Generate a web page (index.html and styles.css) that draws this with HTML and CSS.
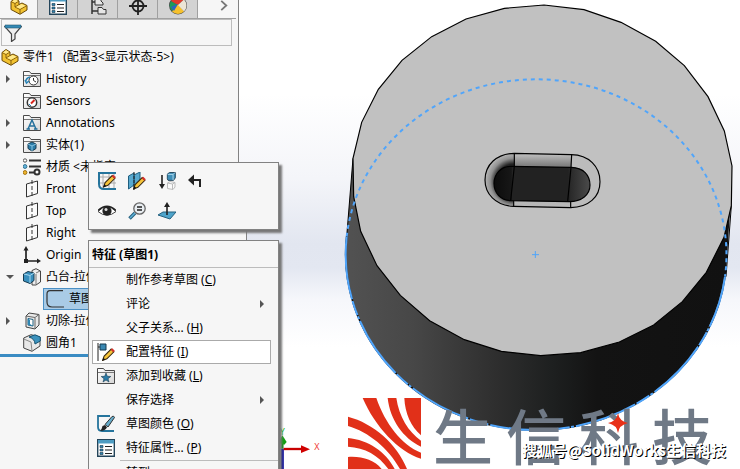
FILE: index.html
```
<!DOCTYPE html>
<html lang="zh-CN">
<head>
<meta charset="utf-8">
<title>零件1</title>
<link rel="stylesheet" href="styles.css">
</head>
<body>
<svg class="defs" aria-hidden="true">
  <defs>
    <linearGradient id="paper" x1="0" y1="0" x2="1" y2="1"><stop offset="0" stop-color="#fff"/><stop offset="1" stop-color="#d6d6d6"/></linearGradient>
    <symbol id="part" viewBox="0 0 18 18"><path d="M1 4.500L5 1.500L9 4L9 7.500L12 6L17 8.500V13L10 17.300L1 12.500Z" fill="#f2c230" stroke="#6b4a08"/><path d="M1 4.500L5 6.500L9 4M5 6.500V10L10 12.500L17 8.500M5 10L9 7.500M10 12.500V17" fill="none" stroke="#8a6410"/><path d="M2 4.500L5 2.300L8 4L5 5.700ZM6 10L11.500 7L15.500 8.700L10 11.700Z" fill="#ffe98c"/></symbol>
    <symbol id="folder" viewBox="0 0 18 18"><path d="M.500 16.500V1.500H6.500L8 3.500H17.500V16.500Z" fill="url(#paper)" stroke="#4a4a4a"/><path d="M1 5.500H17" stroke="#777"/></symbol>
    <symbol id="plane" viewBox="0 0 18 18"><path d="M3.500 4L14.500 1V13.500L3.500 17Z" fill="#fafafa" stroke="#333"/><path d="M9 0V18" stroke="#333" stroke-dasharray="4 2"/></symbol>
    <symbol id="list" viewBox="0 0 18 18"><path d="M.700 .700H17.300V17.300H.700Z" fill="#fff" stroke="#24455a" stroke-width="1.400"/><path d="M1 1H17V4.500H1Z" fill="#4e9cc2"/><path d="M3 6.500H6V8.500H3ZM3 10H6V12H3ZM3 13.500H6V15.500H3Z" fill="#2f83b0" stroke="#18384a" stroke-width=".6"/><path d="M8 7.500H15M8 11H15M8 14.500H15" stroke="#222" stroke-width="1.200"/></symbol>
    <symbol id="pencil" viewBox="0 0 12 12"><path d="M.500 11.500L2 7.500L8.500 1L11 3.500L4.500 10Z" fill="#f7c53a" stroke="#3a2a10"/><path d="M8 1.500L9.500 .200L11.800 2.500L10.500 4Z" fill="#d8322a"/><path d="M.300 11.700L1.300 9L3 10.700Z" fill="#111"/></symbol>
    <symbol id="cube" viewBox="0 0 10 10"><path d="M.500 2.500L3 .600H9.500V6.500L7.500 9.300H1.500L.500 7.500Z" fill="#3f8fb8" stroke="#173b50"/><path d="M1 2.700H7L9 1M7 3V9" fill="none" stroke="#b4dcf0"/></symbol>
  </defs>
</svg>

<div class="app">
  <aside class="sidebar">
    <nav class="tabs" aria-label="管理器">
      <button class="tab active" aria-label="设计树"><svg class="icon"><use href="#part"/></svg></button>
      <button class="tab" aria-label="属性"><svg class="icon"><use href="#list"/></svg></button>
      <button class="tab" aria-label="配置"><svg class="icon" viewBox="0 0 18 18"><path d="M3 1V17M3 5H7M3 14H9" fill="none" stroke="#333" stroke-width="1.500"/><path d="M6 1H12V4L14 6V8H6ZM9 10.500H13L14.500 12.500H17V17H9Z" fill="#e6e6e6" stroke="#333"/></svg></button>
      <button class="tab" aria-label="尺寸"><svg class="icon" viewBox="0 0 18 18"><circle cx="9" cy="9" r="5.500" fill="none" stroke="#222" stroke-width="1.800"/><path d="M9 0V18M0 9H18" stroke="#222" stroke-width="1.800"/></svg></button>
      <button class="tab" aria-label="外观"><svg class="icon" viewBox="0 0 18 18"><circle cx="9" cy="8.500" r="9" fill="#4b4b4b"/><path d="M9 8L2 4A8.500 8.500 0 0 0 3 14Z" fill="#1d9a58"/><path d="M9 7L3 14.500A8.500 8.500 0 0 0 15 14.500Z" fill="#f6c12d"/><path d="M9 8L2 4A8.500 8.500 0 0 1 15 2.500Z" fill="#e23a2c"/><path d="M9 8L15 2.500A8.500 8.500 0 0 1 15 14.500Z" fill="#ece5d6"/><path d="M9 7L2 10L5 14Z" fill="#2b65c0"/></svg></button>
      <button class="more" aria-label="更多"><svg class="chevron" viewBox="0 0 8 12"><path d="M1 1L6.500 6L1 11" fill="none" stroke="#777" stroke-width="2"/></svg></button>
    </nav>
    <label class="filter">
      <svg class="icon" viewBox="0 0 18 18"><path d="M.700 2.500H17.300L11 10V15L7.500 17.500V10Z" fill="#eee" stroke="#444" stroke-width="1.200"/><path d="M1 1H17V4H1Z" fill="#3389b5" stroke="#26586f" stroke-width=".6"/></svg>
      <input type="text" aria-label="过滤器">
    </label>
    <ul class="tree">
      <li class="row root"><svg class="icon"><use href="#part"/></svg><span>零件1&nbsp;&nbsp; (配置3&lt;显示状态-5&gt;)</span></li>
      <li class="row"><button class="twist" aria-label="展开"></button><svg class="icon" viewBox="0 0 18 18"><use href="#folder"/><circle cx="10.500" cy="10.500" r="4.500" fill="#fff" stroke="#333"/><path d="M10.500 8V10.500L13 12" fill="none" stroke="#333"/><path d="M2.500 12C3 9 4.500 7.500 7 7M2 10L3.500 13L6 11" fill="none" stroke="#2a83b5" stroke-width="1.600"/></svg><span>History</span></li>
      <li class="row leaf"><svg class="icon" viewBox="0 0 18 18"><use href="#folder"/><circle cx="9" cy="10.500" r="4.700" fill="#fff" stroke="#333" stroke-width="1.500"/><path d="M8 11.500L11.500 8" stroke="#d7261e" stroke-width="2"/><path d="M6 12L8 14" stroke="#2a83b5"/></svg><span>Sensors</span></li>
      <li class="row"><button class="twist" aria-label="展开"></button><svg class="icon" viewBox="0 0 18 18"><use href="#folder"/><path d="M5 15L9 6L13 15M6.500 12H11.500M3.500 15H7M11 15H14.500" fill="none" stroke="#25709c" stroke-width="1.500"/></svg><span>Annotations</span></li>
      <li class="row"><button class="twist" aria-label="展开"></button><svg class="icon" viewBox="0 0 18 18"><use href="#folder"/><path d="M5 8L9 6L13 8V12.500L9 15L5 12.500Z" fill="#2c7ca8" stroke="#173b50"/><path d="M5 8L9 10L13 8M9 10V15" fill="none" stroke="#86c4e2"/></svg><span>实体(1)</span></li>
      <li class="row leaf"><svg class="icon" viewBox="0 0 18 18"><circle cx="2" cy="2.500" r="1.700" fill="#fff" stroke="#555"/><circle cx="2" cy="8.500" r="1.900" fill="#62b4dc" stroke="#31708f"/><circle cx="2" cy="14.500" r="1.900" fill="#f0b62c" stroke="#a37414"/><path d="M6 2.500H18M6 8.500H18M6 14.500H11" stroke="#333" stroke-width="1.800"/><circle cx="14" cy="14" r="2.500" fill="#fff" stroke="#333" stroke-width="2"/></svg><span>材质 &lt;未指定&gt;</span></li>
      <li class="row leaf"><svg class="icon"><use href="#plane"/></svg><span>Front</span></li>
      <li class="row leaf"><svg class="icon"><use href="#plane"/></svg><span>Top</span></li>
      <li class="row leaf"><svg class="icon"><use href="#plane"/></svg><span>Right</span></li>
      <li class="row leaf"><svg class="icon" viewBox="0 0 18 18"><path d="M3 2V15H16" fill="none" stroke="#222" stroke-width="1.700"/><path d="M.500 4.500L3 0L5.500 4.500ZM14 12.500L18 15L14 17.500ZM1 13H5V17H1Z" fill="#222"/></svg><span>Origin</span></li>
      <li class="row"><button class="twist open" aria-label="折叠"></button><svg class="icon" viewBox="0 0 18 18"><path d="M9 2.500L13 .700L17.500 3V14L13 17H9Z" fill="#eee" stroke="#444"/><path d="M13 6V16M13 5L17 3" stroke="#777"/><path d="M.500 6L5 3.500L11 5V12.500L7 15.500L.500 13Z" fill="#398fbd" stroke="#173b50"/><path d="M1 6L7 7.500L11 5M7 8V15" fill="none" stroke="#a8d8ef"/></svg><span>凸台-拉伸1</span></li>
      <li class="row selected"><svg class="icon" viewBox="0 0 18 18"><path d="M17 .700H4Q1 .700 1 4V12Q1 17 6 17H18" fill="none" stroke="#333" stroke-width="1.200"/></svg><span>草图1</span></li>
      <li class="row"><button class="twist" aria-label="展开"></button><svg class="icon" viewBox="0 0 18 18"><path d="M3 4L6 1L16 2.500V13L12 17L3 15Z" fill="#e8e8e8" stroke="#444"/><path d="M3 4L12 5.500L16 2.500M12 6V16.500" fill="none" stroke="#666"/><path d="M5 6.500L10 7.500V14L5 13Z" fill="#fff" stroke="#22617f"/><path d="M5 6.500L7 8V12L10 14L5 13Z" fill="#2e86b3"/></svg><span>切除-拉伸1</span></li>
      <li class="row leaf"><svg class="icon" viewBox="0 0 18 18"><path d="M.700 4L8 .700L17 3V12L9 17.300L.700 14Z" fill="#e8e8e8" stroke="#444"/><path d="M.700 5L8 8L9 17" fill="none" stroke="#888"/><path d="M6 3L12 .800L17.300 3V7L12 10Q12 5 6 3Z" fill="#3c92bd" stroke="#17526f"/></svg><span>圆角1</span></li>
    </ul>
  </aside>

  <main class="viewport">
    <svg class="model" viewBox="0 0 1503 1407" preserveAspectRatio="xMinYMin meet" role="img" aria-label="零件模型">
      <defs>
        <linearGradient id="side" gradientUnits="userSpaceOnUse" x1="31" y1="0" x2="1173" y2="0"><stop offset="0" stop-color="#525252"/><stop offset=".18" stop-color="#474747"/><stop offset=".38" stop-color="#303030"/><stop offset=".54" stop-color="#1e2020"/><stop offset=".66" stop-color="#131313"/><stop offset="1" stop-color="#111"/></linearGradient>
        <linearGradient id="rim" x1="0" y1="0" x2="0" y2="1"><stop offset="0" stop-color="#c2c2c2"/><stop offset=".22" stop-color="#808080"/><stop offset=".5" stop-color="#b0b0b0"/><stop offset="1" stop-color="#b8b8b8"/></linearGradient>
        <radialGradient id="rimLeft" gradientUnits="userSpaceOnUse" cx="536" cy="545" r="88"><stop offset=".6" stop-color="#222"/><stop offset=".8" stop-color="#909090"/><stop offset="1" stop-color="#bbb"/></radialGradient>
        <linearGradient id="pit" x1="0" x2="1"><stop offset="0" stop-color="#0c0c0c"/><stop offset=".18" stop-color="#171717"/><stop offset=".19" stop-color="#222"/><stop offset=".77" stop-color="#222"/><stop offset=".8" stop-color="#2a2a2a"/><stop offset="1" stop-color="#4b4b4b"/></linearGradient>
      </defs>
      <g transform="translate(288 0)">
        <ellipse cx="602" cy="763" rx="570" ry="527" fill="url(#side)"/>
        <path d="M54 475L33 735L80 900L1120 900L1172 830L1190 560Z" fill="url(#side)"/>
        <path d="M54 475L33 735M1189 617L1173 830" stroke="#000" stroke-width="3"/>
        <path d="M627 15L747 29L858 67L962 124L1048 197L1119 290L1168 393L1191 498L1189 617L1167 712L1114 817L1042 905L956 975L853 1026L737 1058L617 1067L499 1054L388 1019L284 962L196 886L126 797L77 694L56 590L54 475L80 367L130 268L201 181L290 110L393 57L508 25Z" fill="#c1c1c1" stroke="#000" stroke-width="3.500"/>
        <path d="M35 710A570 527 0 0 1 602 238A570 527 0 0 1 1170 830" fill="none" stroke="#50a5fb" stroke-width="6" stroke-dasharray="12 12"/>
        <path d="M35 710A570 527 0 0 0 602 1290A570 527 0 0 0 1170 830" fill="none" stroke="#111" stroke-width="5"/>
        <path d="M35 710A570 527 0 0 0 602 1290A570 527 0 0 0 1170 830" fill="none" stroke="#50a5fb" stroke-width="6" stroke-dasharray="190 5 45 4 9 6"/>
        <path d="M538 460L709 464C762 465 795 500 795 545C795 592 760 622 707 623L536 619C480 617 450 580 450 540C450 495 485 460 538 460Z" fill="url(#rim)"/>
        <path d="M538 462C485 462 452 495 452 540C452 580 480 615 536 617Z" fill="url(#rimLeft)"/>
        <path d="M709 464C762 465 795 500 795 545C795 592 760 622 707 623L705 604C745 600 768 580 764 548C762 520 740 503 709 502Z" fill="#bcbcbc"/>
        <path d="M538 460L709 464C762 465 795 500 795 545C795 592 760 622 707 623L536 619C480 617 450 580 450 540C450 495 485 460 538 460Z" fill="none" stroke="#000" stroke-width="3.500"/>
        <path d="M527 499L709 502C745 503 765 525 765 555C765 585 740 604 703 605L527 602C497 600 477 580 477 550C477 520 500 499 527 499Z" fill="url(#pit)" stroke="#000" stroke-width="3.500"/>
        <path d="M538 460V499L527 602M536 602V619M710 464L708 502L698 604M707 604V623" fill="none" stroke="#000" stroke-width="3.500"/>
        <path d="M591 764H612M601 753V774" stroke="#50a5fb" stroke-width="3"/>
      </g>
      <g class="triad">
        <path d="M130 1346V1407" stroke="#0b0ba0" stroke-width="9"/>
        <path d="M130 1346V1322" stroke="#0a8a0a" stroke-width="7"/><path d="M118 1328L130 1306L143 1326L136 1334Z" fill="#12a012"/>
        <path d="M134 1347H188" stroke="#c80000" stroke-width="7"/><path d="M186 1336L213 1348L186 1359Z" fill="#d00000"/>
        <text class="axis y" x="122" y="1305">Y</text>
        <text class="axis x" x="226" y="1351">X</text>
      </g>
    </svg>
    <div class="brand">
      <svg class="logo" viewBox="39 54 219 213"><path d="M83 54H124C150 130 200 195 258 218V236C190 215 120 140 83 54ZM158 54H184C192 110 220 155 258 182V200C205 175 165 120 158 54ZM208 54H258V166C228 140 210 100 208 54ZM39 110C115 130 185 190 216 267H195C160 205 100 155 39 138ZM39 174C100 180 152 215 179 267H160C130 225 90 203 39 200ZM39 231C80 228 118 240 140 267H39Z" fill="#e13019"/></svg>
      <div class="name"><span>生</span><span>信</span><span>科</span><span>技</span></div>
      <svg class="star" viewBox="0 0 20 20"><path d="M10 0Q11 8 20 10Q11 12 10 20Q9 12 0 10Q9 8 10 0Z" fill="#e83018"/></svg>
    </div>
    <p class="credit">搜狐号@SolidWorks生信科技</p>
  </main>
</div>

<div class="splitter"></div>

<div class="popup toolbar" role="toolbar">
  <button aria-label="编辑草图"><svg class="icon" viewBox="0 0 18 18"><path d="M5 0V18M11 0V18M0 5H18M0 11H18M16 0V18" stroke="#aaa"/><path d="M18 1H1V12Q1 17 6 17H18" fill="none" stroke="#25749c" stroke-width="2"/><use href="#pencil" x="5" y="2" width="13" height="14"/></svg></button>
  <button aria-label="编辑草图平面"><svg class="icon" viewBox="0 0 18 18"><path d="M.500 4L6 1V13L.500 17ZM6 3L12 0V12L6 16Z" fill="#58a9cf" stroke="#1f5e7e"/><path d="M6 0V18" stroke="#222" stroke-dasharray="3 1"/><use href="#pencil" x="5" y="4" width="13" height="14"/></svg></button>
  <button aria-label="向下滚动"><svg class="icon" viewBox="0 0 18 18"><path d="M4 3V13" stroke="#222" stroke-width="1.600"/><path d="M1 12H7L4 17Z" fill="#222"/><use href="#cube" x="8.500" y="0" width="9.500" height="9"/><path d="M9.500 11L12 9.500L17 10.500V15L15 17.500L9.500 16.500ZM9.500 11L14.500 12L17 10.500M14.500 12V17" fill="#fafafa" stroke="#bbb"/></svg></button>
  <button aria-label="退回"><svg class="icon" viewBox="0 0 18 18"><path d="M5 8H12V15" fill="none" stroke="#222" stroke-width="2"/><path d="M0 8L6 2.500V13.500Z" fill="#222"/></svg></button>
  <button aria-label="显示"><svg class="icon" viewBox="0 0 18 18"><path d="M0 9.500Q9 0 18 9.500Q9 17 0 9.500Z" fill="#fff" stroke="#444"/><path d="M0 8.500Q9 0 18 8.500" fill="none" stroke="#222" stroke-width="1.600"/><circle cx="9" cy="9" r="4.600" fill="#222"/><circle cx="8" cy="7.500" r="1.500" fill="#ddd"/></svg></button>
  <button aria-label="放大所选范围"><svg class="icon" viewBox="0 0 18 18"><path d="M1.500 16.500L7 11" stroke="#26617f" stroke-width="3.500"/><path d="M2 16L7 11" stroke="#5fb1d8" stroke-width="1.500"/><circle cx="11.500" cy="6.500" r="5.700" fill="#e9eef2" stroke="#666" stroke-width="1.300"/><path d="M9 5H14M9 8H14" stroke="#222" stroke-width="1.600"/></svg></button>
  <button aria-label="正视于"><svg class="icon" viewBox="0 0 18 18"><path d="M0 13L5 10H18L12 17Z" fill="#4ea4cb" stroke="#25617f"/><path d="M9 13V3" stroke="#222" stroke-width="1.600"/><path d="M6 5L9 0L12 5Z" fill="#222"/></svg></button>
</div>

<div class="popup menu" role="menu">
  <h2>特征 (草图1)</h2>
  <button role="menuitem"><i class="slot"></i><span>制作参考草图 (<u>C</u>)</span></button>
  <button role="menuitem" class="sub"><i class="slot"></i><span>评论</span></button>
  <button role="menuitem"><i class="slot"></i><span>父子关系... (<u>H</u>)</span></button>
  <button role="menuitem" class="hover"><svg class="icon" viewBox="0 0 18 18"><path d="M1 0V18M1 4H4" stroke="#222"/><path d="M3 1H9V7H3Z" fill="#3988b2" stroke="#173b50"/><use href="#pencil" x="5" y="5" width="13" height="13"/></svg><span>配置特征 (<u>I</u>)</span></button>
  <button role="menuitem"><svg class="icon" viewBox="0 0 18 18"><use href="#folder"/><path d="M9 6L10.300 9.300L13.800 9.500L11 11.700L12 15L9 13L6 15L7 11.700L4.200 9.500L7.700 9.300Z" fill="#2c7ca8" stroke="#173b50" stroke-width=".6"/></svg><span>添加到收藏 (<u>L</u>)</span></button>
  <button role="menuitem" class="sub"><i class="slot"></i><span>保存选择</span></button>
  <button role="menuitem"><svg class="icon" viewBox="0 0 18 18"><path d="M13 1H1V12Q1 16 5 16H17" fill="none" stroke="#25749c" stroke-width="1.800"/><path d="M3 16Q5 14 5.500 11L8 10L10 12.500Q8 16 3 16Z" fill="#222"/><path d="M8 9.500L15 1.500Q17 .500 17.500 2.500L11 12Z" fill="#65abc9" stroke="#333"/></svg><span>草图颜色 (<u>O</u>)</span></button>
  <button role="menuitem"><svg class="icon"><use href="#list"/></svg><span>特征属性... (<u>P</u>)</span></button>
  <hr>
  <button role="menuitem"><i class="slot"></i><span>转到</span></button>
</div>
</body>
</html>
```
FILE: styles.css
```
* { box-sizing: border-box; }

body {
  margin: 0;
  height: 100vh;
  overflow: hidden;
  position: relative;
  font: 12px/22px "Noto Sans", "Noto Sans CJK SC", sans-serif;
  color: #000;
  background: #fff;
}

button {
  font: inherit;
  color: inherit;
  background: none;
  border: 0;
  padding: 0;
}

.defs { position: absolute; width: 0; height: 0; }
.icon { width: 18px; height: 18px; flex: none; display: block; }

.app { display: flex; height: 100%; }

/* Feature tree */
.sidebar {
  flex: 0 0 239px;
  background: #f6f6f6;
  border-right: 1px solid #828282;
  overflow: hidden;
}

.tabs {
  display: flex;
  height: 19px;
  margin-right: 2px;
  border-bottom: 1px solid #a0a0a0;
}
.tab {
  flex: 0 0 40px;
  display: flex;
  align-items: flex-end;
  justify-content: center;
  padding-bottom: 3px;
  background: #d3d3d3;
  border-right: 1px solid #a0a0a0;
}
.tab.active { flex-basis: 38px; background: #f6f6f6; }
.more { flex: 1; display: flex; justify-content: center; margin-left: 14px; }
.chevron { width: 8px; height: 11px; }

.filter {
  display: flex;
  align-items: center;
  height: 27px;
  margin: 0 6px 0 1px;
  padding-left: 2px;
  border: 1px solid #bcbcbc;
}
.filter input {
  flex: 1;
  min-width: 0;
  border: 0;
  background: none;
  outline: 0;
}

.tree {
  list-style: none;
  margin: 0;
  padding: 0;
  border-bottom: 3px solid #3a8cc3;
}
.row {
  display: flex;
  align-items: center;
  gap: 5px;
  height: 22px;
  padding-left: 6px;
  white-space: nowrap;
}
.row.root { padding-left: 1px; gap: 4px; }
.row.leaf { padding-left: 23px; }
.row.selected {
  margin-left: 43px;
  padding-left: 2px;
  background: #a9cbe6;
  border: 1px solid #4a8fc4;
}

.twist {
  width: 12px;
  height: 10px;
}
.twist::before {
  content: "";
  display: block;
  width: 0;
  border-left: 4px solid #555;
  border-top: 4px solid transparent;
  border-bottom: 4px solid transparent;
}
.twist.open::before {
  border-left: 4px solid transparent;
  border-right: 4px solid transparent;
  border-top: 4px solid #555;
  border-bottom: 0;
}

.splitter {
  position: absolute;
  left: 238px;
  top: 163px;
  bottom: 0;
  width: 9px;
  background: #f6f6f6;
  border-right: 1px solid #828282;
}

/* Graphics area */
.viewport {
  flex: 1;
  min-width: 0;
  position: relative;
  overflow: hidden;
  background: linear-gradient(#fff 20%, #f4f5f9 38%, #e2e6f0 52%, #e3e7f1 57%, #f6f7fb 64%, #fff 74%);
}
.model { display: block; width: 100%; height: 100%; }
.axis { font-size: 27px; }
.axis.x { fill: #f04038; }
.axis.y { fill: #20c020; }

.brand {
  position: absolute;
  left: 109px;
  bottom: 0;
  display: flex;
  align-items: center;
  gap: 12px;
}
.logo { width: 73px; height: 71px; }
.name {
  display: flex;
  gap: 13px;
  font: 500 60px/71px "Noto Sans CJK SC", sans-serif;
  color: #6f7986;
}
.star {
  position: absolute;
  left: 260px;
  top: 15px;
  width: 20px;
  height: 20px;
}
.credit {
  position: absolute;
  right: 14px;
  bottom: 8px;
  margin: 0;
  font: 700 15px/22px "Noto Sans CJK SC", sans-serif;
  color: #fff;
  text-shadow: 1px 1px 0 #000;
}

/* Floating menus */
.popup {
  position: absolute;
  left: 88px;
  width: 191px;
  background: #f6f6f6;
  border: 1px solid #828282;
  box-shadow: 3px 3px 2px #777;
}
.toolbar {
  top: 162px;
  display: grid;
  grid-template-columns: repeat(4, 18px);
  gap: 12px;
  padding: 9px;
}
.menu {
  top: 240px;
  bottom: -16px;
  overflow: hidden;
}
.menu h2 {
  margin: 0;
  padding-left: 3px;
  font-size: 12px;
  line-height: 27px;
  height: 27px;
  border-bottom: 1px solid #bcbcbc;
}
.menu button {
  display: flex;
  align-items: center;
  gap: 11px;
  width: 179px;
  height: 24px;
  margin-left: 3px;
  padding-left: 4px;
  border: 1px solid transparent;
  white-space: nowrap;
}
.menu button.hover { background: #fff; border-color: #aaa; }
.slot { width: 18px; }
.sub::after {
  content: "";
  margin-left: auto;
  margin-right: 6px;
  border-left: 4px solid #555;
  border-top: 4px solid transparent;
  border-bottom: 4px solid transparent;
}
.menu hr {
  margin: 0 0 0 31px;
  border: 0;
  border-top: 1px solid #bcbcbc;
}
```
